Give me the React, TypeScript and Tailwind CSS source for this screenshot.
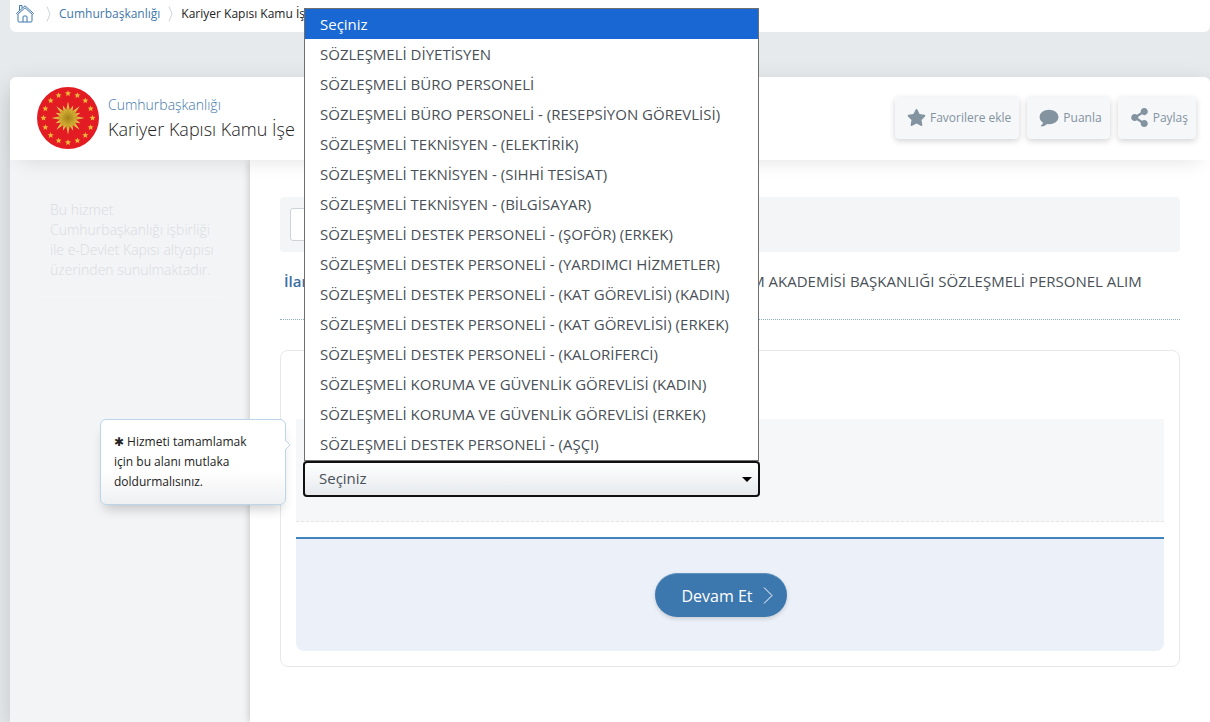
import { useState } from "react";
import type { ReactNode } from "react";
import { FaShareAlt, FaStar } from "react-icons/fa";

const POSITIONS = [
  "Seçiniz",
  "SÖZLEŞMELİ DİYETİSYEN",
  "SÖZLEŞMELİ BÜRO PERSONELİ",
  "SÖZLEŞMELİ BÜRO PERSONELİ - (RESEPSİYON GÖREVLİSİ)",
  "SÖZLEŞMELİ TEKNİSYEN - (ELEKTİRİK)",
  "SÖZLEŞMELİ TEKNİSYEN - (SIHHİ TESİSAT)",
  "SÖZLEŞMELİ TEKNİSYEN - (BİLGİSAYAR)",
  "SÖZLEŞMELİ DESTEK PERSONELİ - (ŞOFÖR) (ERKEK)",
  "SÖZLEŞMELİ DESTEK PERSONELİ - (YARDIMCI HİZMETLER)",
  "SÖZLEŞMELİ DESTEK PERSONELİ - (KAT GÖREVLİSİ) (KADIN)",
  "SÖZLEŞMELİ DESTEK PERSONELİ - (KAT GÖREVLİSİ) (ERKEK)",
  "SÖZLEŞMELİ DESTEK PERSONELİ - (KALORİFERCİ)",
  "SÖZLEŞMELİ KORUMA VE GÜVENLİK GÖREVLİSİ (KADIN)",
  "SÖZLEŞMELİ KORUMA VE GÜVENLİK GÖREVLİSİ (ERKEK)",
  "SÖZLEŞMELİ DESTEK PERSONELİ - (AŞÇI)",
];

// Points of a star or sun centred on (cx, cy)
function starPoints(cx: number, cy: number, outer: number, inner: number, tips: number) {
  return Array.from({ length: tips * 2 }, (_, i) => {
    const r = i % 2 === 0 ? outer : inner;
    const a = (Math.PI * i) / tips - Math.PI / 2;
    return `${(cx + r * Math.cos(a)).toFixed(2)},${(cy + r * Math.sin(a)).toFixed(2)}`;
  }).join(" ");
}

function Emblem() {
  return (
    <svg viewBox="0 0 64 64" className="size-16 shrink-0" aria-hidden="true">
      <defs>
        <radialGradient id="sun">
          <stop offset="0" stopColor="#a8861c" />
          <stop offset="0.5" stopColor="#cfab30" />
          <stop offset="1" stopColor="#ecd76a" />
        </radialGradient>
      </defs>
      <circle cx="32" cy="32" r="31" fill="#e31b23" />
      {Array.from({ length: 16 }, (_, i) => {
        const a = (Math.PI * i) / 8 - Math.PI / 2;
        return (
          <polygon
            key={i}
            points={starPoints(32 + 24.5 * Math.cos(a), 32 + 24.5 * Math.sin(a), 3.2, 1.4, 5)}
            fill="#ecb83c"
          />
        );
      })}
      <polygon points={starPoints(32, 32, 16.5, 6, 8)} fill="url(#sun)" />
      <polygon
        points={starPoints(32, 32, 13.5, 6, 8)}
        fill="url(#sun)"
        transform="rotate(22.5 32 32)"
      />
      {Array.from({ length: 16 }, (_, i) => (
        <path
          key={i}
          d="M32 32V23"
          stroke="#a3831c"
          strokeWidth="0.3"
          transform={`rotate(${i * 22.5} 32 32)`}
        />
      ))}
    </svg>
  );
}

function HomeIcon() {
  return (
    <svg
      viewBox="0 0 18 18"
      className="size-[18px]"
      fill="none"
      stroke="#3f78ad"
      strokeLinejoin="round"
      aria-hidden="true"
    >
      <path d="M.5 8.500 9 .8l8.500 7.700-1 1L9 2.800 1.500 9.500z" />
      <path d="M3.500 5.500V.5H6v2.500" />
      <path d="M2 9.500V16q0 1 1 1h12q1 0 1-1V9.500" />
      <path d="M7 17v-5q0-1 1-1h2q1 0 1 1v5" />
    </svg>
  );
}

function CrumbArrow() {
  return (
    <svg viewBox="0 0 5 16" className="h-4 w-[5px]" fill="none" stroke="#cdd3d8" aria-hidden="true">
      <path d="M1 .5 4 8l-3 7.500" />
    </svg>
  );
}

function CommentIcon() {
  return (
    <svg viewBox="0 0 20 18" className="h-[18px] w-5" fill="currentColor" aria-hidden="true">
      <ellipse cx="10" cy="8" rx="9.500" ry="7.300" />
      <path d="M4.500 12.500q-.5 2.500-2.500 4v.9q4 0 7-2.900z" />
    </svg>
  );
}

function ActionButton({ icon, children }: { icon: ReactNode; children: ReactNode }) {
  return (
    <button
      type="button"
      className="flex h-[42px] items-center gap-1 rounded bg-[#f5f7f9] pr-2 pl-3 text-xs text-[#8393a0] shadow-[0_2px_6px_rgba(0,0,0,0.18)]"
    >
      {icon}
      {children}
    </button>
  );
}

function PositionField() {
  const [open, setOpen] = useState(true);
  const [value, setValue] = useState(POSITIONS[0]);

  return (
    <div className="relative mt-[53px] border-b border-dashed border-[#e3e5e7] bg-[#f6f7f9] px-[7px] pt-3 pb-6">
      <label htmlFor="position" className="ml-2 block h-[30px] text-sm leading-5 font-semibold">
        Pozisyon
      </label>

      <div className="relative w-[457px] max-w-full">
        <select
          id="position"
          value={value}
          onChange={(e) => setValue(e.target.value)}
          onMouseDown={(e) => {
            e.preventDefault();
            setOpen((v) => !v);
          }}
          className="h-9 w-full appearance-none rounded border-2 border-[#101010] bg-linear-to-b from-white to-[#e6eaed] px-[14px] pb-[2px] text-[15px] text-[#495057] outline-none"
        >
          {POSITIONS.map((p) => (
            <option key={p}>{p}</option>
          ))}
        </select>
        <svg
          viewBox="0 0 10 5"
          className="pointer-events-none absolute top-4 right-2 h-[5px] w-[10px]"
          aria-hidden="true"
        >
          <path d="M0 0h10L5 5z" fill="#000" />
        </svg>

        {open && (
          <ul
            role="listbox"
            aria-label="Pozisyon"
            className="absolute inset-x-px bottom-full z-30 border border-[#6f6f6f] bg-white pb-px"
          >
            {POSITIONS.map((p) => (
              <li
                key={p}
                role="option"
                aria-selected={p === value}
                onClick={() => {
                  setValue(p);
                  setOpen(false);
                }}
                className="h-[30px] cursor-default truncate px-[15px] text-[15px] leading-[30px] text-[#495057] aria-selected:bg-[#1967d2] aria-selected:text-white"
              >
                {p}
              </li>
            ))}
          </ul>
        )}
      </div>

      {/* Required-field hint, hangs off the left of the row */}
      <div
        role="tooltip"
        className="absolute top-0 right-full z-20 mr-[10px] w-[186px] rounded-md border border-[#bdd5ea] bg-linear-to-b from-white from-60% to-[#eff0f2] py-3 pr-6 pl-[13px] text-xs leading-5 text-[#222] shadow-[0_8px_12px_-4px_rgba(0,0,0,0.2)]"
      >
        ✱ Hizmeti tamamlamak için bu alanı mutlaka doldurmalısınız.
        <svg
          viewBox="0 0 6 10"
          className="absolute top-5 left-full h-[10px] w-[6px]"
          aria-hidden="true"
        >
          <path d="M0 0 5 5 0 10" fill="#fff" stroke="#bdd5ea" />
        </svg>
      </div>
    </div>
  );
}

export default function App() {
  return (
    <div className="flex min-h-screen flex-col bg-[#e6eaed] pl-[10px] font-['Open_Sans',sans-serif] text-[#495057]">
      {/* Breadcrumb */}
      <nav className="flex h-8 items-center gap-2 rounded-b-md bg-white pb-[5px] pl-[6px] text-xs">
        <a href="#" aria-label="Ana sayfa" className="mr-1">
          <HomeIcon />
        </a>
        <CrumbArrow />
        <a href="#" className="text-[#3f78ad]">
          Cumhurbaşkanlığı
        </a>
        <CrumbArrow />
        <span className="text-[#222]">Kariyer Kapısı Kamu İşe Alım</span>
      </nav>

      <div className="mt-[45px] flex grow flex-col rounded-t-md shadow-[0_8px_25px_rgba(0,0,0,0.16)]">
        {/* Service title */}
        <header className="relative z-10 flex h-[83px] items-center rounded-t-md bg-white pr-[14px] pb-[2px] pl-[26px] shadow-[0_10px_20px_-10px_rgba(0,0,0,0.12)]">
          <Emblem />
          <h1 className="ml-2 pb-[2px] font-light">
            <a href="#" className="block text-sm leading-6 text-[#3f78ad]">
              Cumhurbaşkanlığı
            </a>
            <span className="block text-lg leading-6 text-[#222]">Kariyer Kapısı Kamu İşe</span>
          </h1>
          <div className="ml-auto flex gap-2">
            <ActionButton icon={<FaStar size={19} />}>Favorilere ekle</ActionButton>
            <ActionButton icon={<CommentIcon />}>Puanla</ActionButton>
            <ActionButton icon={<FaShareAlt size={19} />}>Paylaş</ActionButton>
          </div>
        </header>

        <div className="flex grow">
          <aside className="w-60 shrink-0 bg-[#f3f4f6] px-[27px]">
            <p className="border-b border-[#f5f6f7] pt-10 pr-1 pb-4 pl-[13px] text-sm leading-5 font-light text-[#d9dcdf]">
              Bu hizmet Cumhurbaşkanlığı işbirliği ile e-Devlet Kapısı altyapısı üzerinden
              sunulmaktadır.
            </p>
          </aside>

          <main className="relative grow bg-white px-[30px] pt-[37px] pb-12 shadow-[-2px_0_6px_rgba(0,0,0,0.14)]">
            <div className="rounded bg-[#f4f5f7] px-[10px] py-[11px]">
              <button
                type="button"
                aria-label="Geri dön"
                className="block h-[33px] w-24 rounded-[3px] border border-[#ced3d8] bg-white"
              />
            </div>

            <dl className="flex border-b border-dotted border-[#8fadc8] pt-[17px] pb-[26px] pl-1 text-[15px] leading-6">
              <dt className="w-[215px] shrink-0 font-semibold text-[#3a6ea5]">İlan Adı</dt>
              <dd>MİLLÎ EĞİTİM BAKANLIĞI MİLLÎ EĞİTİM AKADEMİSİ BAŞKANLIĞI SÖZLEŞMELİ PERSONEL ALIM</dd>
            </dl>

            <form
              className="mt-[30px] rounded-lg border border-[#e6e8ea] p-[15px]"
              onSubmit={(e) => e.preventDefault()}
            >
              <PositionField />
              <div className="mt-[15px] flex justify-center rounded-b-lg border-t-2 border-[#4183bd] bg-[#ecf1f9] py-[34px] pr-[18px]">
                <button
                  type="submit"
                  className="flex h-11 items-center gap-[10px] rounded-[22px] border-t border-[#5f92c0] bg-[#3c77ae] pr-[14px] pl-[26px] text-base text-white shadow-[0_2px_4px_rgba(0,0,0,0.15)]"
                >
                  Devam Et
                  <svg
                    viewBox="0 0 10 17"
                    className="h-[17px] w-[10px]"
                    fill="none"
                    stroke="currentColor"
                    aria-hidden="true"
                  >
                    <path d="M1 .5 9 8.500l-8 8" />
                  </svg>
                </button>
              </div>
            </form>
          </main>
        </div>
      </div>
    </div>
  );
}
